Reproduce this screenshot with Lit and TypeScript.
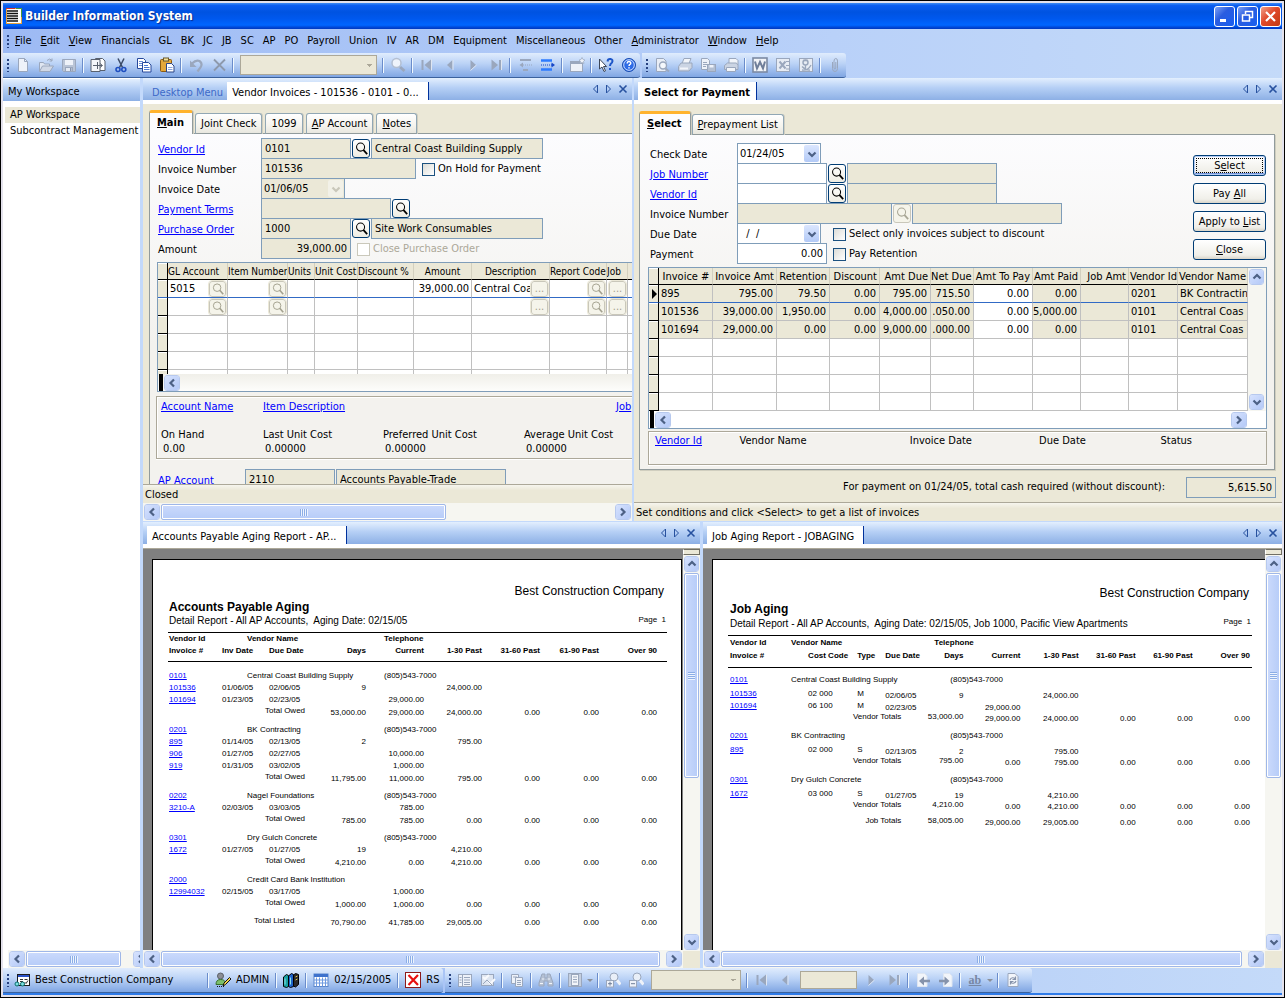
import { LitElement, html, css, svg, nothing, TemplateResult } from "lit";
import { customElement } from "lit/decorators.js";

type Cell = [text: string, span?: number, cls?: string];
type Row = { kind: string; cells: Cell[] };

/* ---------- icons (16 x 16) ---------- */
const G = "#9aa7bd";
const L = "#dfe6f1";
const ICONS: Record<string, TemplateResult> = {
  newdoc: svg`<path d="M3.5 1.5h6l3 3v10h-9z" fill="#eef2f9" stroke=${G}/><path d="M9.500 1.500v3h3" fill="none" stroke=${G}/>`,
  open: svg`<path d="M1.500 14.500v-9h4l1 1.500h5v2" fill=${L} stroke=${G}/><path d="M1.500 14.500l3-5.500h11l-3.500 5.500z" fill="#d0d8e6" stroke=${G}/><path d="M9 3.500q3-3 5 0m0-2v2.500h-2.500" fill="none" stroke=${G}/>`,
  save: svg`<path d="M1.500 2.500h13v12h-12l-1-1z" fill="#b9c4d6" stroke=${G}/><rect x="4" y="3" width="8" height="5" fill="#eef2f9"/><rect x="4.500" y="10.500" width="7" height="4" fill="#e3e9f3" stroke=${G}/><rect x="9" y="11" width="1.500" height="3" fill="#8594ad"/>`,
  copyto: svg`<path d="M5.500 1.500h7l2.500 2.500v9.500h-9.500z" fill="#fff" stroke="#59616e"/><path d="M1 2.500h9v12h-9z" fill="#f4f6fa" stroke="#59616e"/><path d="M3 8.500h9M7.500 5v7M10 6.500l2.500 2-2.500 2" fill="none" stroke="#59616e"/>`,
  cut: svg`<path d="M5 1.500l4.500 9M11 1.500l-4.500 9" stroke="#3a4a66" stroke-width="1.500" fill="none"/><circle cx="5" cy="12.500" r="2" fill="none" stroke="#1f4fc0" stroke-width="1.600"/><circle cx="10.800" cy="12.500" r="2" fill="none" stroke="#1f4fc0" stroke-width="1.600"/>`,
  copy: svg`<path d="M1.500 1.500h6l2 2v8h-8z" fill="#fff" stroke="#27499b"/><path d="M3 4.500h4M3 6.500h4M3 8.500h3" stroke="#6a8fd8"/><path d="M6.500 5.500h6l2.500 2.500v7h-8.500z" fill="#fff" stroke="#27499b"/><path d="M8 8.500h4M8 10.500h5.500M8 12.500h5.500" stroke="#4b78d0"/>`,
  paste: svg`<rect x="1.500" y="2.500" width="11" height="12" rx="1" fill="#e5a83a" stroke="#8a5a10"/><rect x="4.500" y="1" width="5" height="3" fill="#f6e29c" stroke="#6b5a2a"/><path d="M7.500 6.500h5l2.500 2.500v6h-7.500z" fill="#fff" stroke="#2c4687"/><path d="M9 10.500h4.500M9 12.500h4.500" stroke="#8aa4dc"/>`,
  undo: svg`<path d="M4 6.500q4-4 7.500-2.500 3.500 2.500 1 6.500l-3 4" fill="none" stroke=${G} stroke-width="2.200"/><path d="M2 3.500v6.500h6.500z" fill=${G}/>`,
  del: svg`<path d="M3 2.500l11 11M14 2.500l-11 11" stroke="#8d99ac" stroke-width="1.800"/>`,
  find: svg`<path d="M10 10l4.500 4" stroke=${G} stroke-width="3"/><circle cx="6.500" cy="6" r="4.500" fill="#eef3fb" stroke="#b3bfd2" stroke-width="1.500"/>`,
  first: svg`<path d="M3.500 3v10" stroke=${G} stroke-width="2"/><path d="M12 2.500v11L5.500 8z" fill=${G}/><path d="M12.500 2.500v11" stroke=${L}/>`,
  prev: svg`<path d="M10.500 3v10L5 8z" fill=${G}/><path d="M11 3v10" stroke=${L}/>`,
  next: svg`<path d="M5.500 3v10L11 8z" fill=${G}/><path d="M5.500 13.500l6-5.500" stroke=${L}/>`,
  last: svg`<path d="M3.500 2.500v11L10 8z" fill=${G}/><path d="M12 3v10" stroke=${G} stroke-width="2"/><path d="M13.500 3v10" stroke=${L}/>`,
  outdent: svg`<path d="M3 3h11M6 13h5" stroke=${G} stroke-width="2"/><path d="M6 8h9" stroke=${G} stroke-dasharray="1 1"/><path d="M6 5.500L2.500 8l3.500 2.500z" fill=${G}/>`,
  indent: svg`<path d="M1 3.500h11M1 12.500h11" stroke="#2c7bff" stroke-width="2.400"/><path d="M1 8h11" stroke="#1546c8" stroke-dasharray="1 1"/><path d="M11.500 5.500L15 8l-3.500 2.500z" fill="#1546c8"/>`,
  window: svg`<rect x="1.500" y="4.500" width="12" height="10" fill="#edf1f8" stroke=${G}/><rect x="2" y="5" width="11" height="2" fill=${G}/><path d="M13 .500l1 2 2 .500-1.500 1.500.500 2-2-1-2 1 .500-2L10 3l2-.500z" fill="#eef2f9" stroke=${G} stroke-width=".700"/>`,
  whats: svg`<path d="M1.500 2v10l2.500-2 2 4.500 1.500-.700-2-4.300H8.500z" fill="#fff" stroke="#3c4658"/><path d="M9.500 4.500q.500-3 3-2.500 3 .700 1.500 3.500-2 1.500-2 3.500M12 11v2" fill="none" stroke="#1c55c8" stroke-width="2"/>`,
  help: svg`<circle cx="8" cy="8" r="6.500" fill="#2d6be6" stroke="#174bb0"/><circle cx="8" cy="8" r="5.300" fill="none" stroke="#dbe8ff" stroke-width=".900"/><path d="M6.200 6.600q0-2.100 1.900-2 2.200.400 1.500 2.200-1.600.900-1.600 2.100M8 10.200v1.300" fill="none" stroke="#fff" stroke-width="1.500"/>`,
  preview: svg`<path d="M2.500 1.500h7l2.500 2.500v10.500h-9.500z" fill="#e9eef6" stroke=${G}/><circle cx="9" cy="8.500" r="3.500" fill="#f5f8fc" stroke=${G} stroke-width="1.400"/><path d="M11.500 11.500l3.500 3" stroke=${G} stroke-width="2"/>`,
  print: svg`<path d="M5 6.500l2-5h7l-2 5" fill="#f2f5fa" stroke=${G}/><path d="M1.500 9.500l2.500-3.500h11v4.500l-3 3.500h-10.500z" fill="#cbd4e3" stroke=${G}/><path d="M3 11.500h8" stroke="#f2f5fa" stroke-width="2"/>`,
  export: svg`<path d="M1.500 1.500h6l2 2v9h-8z" fill="#eef2f9" stroke=${G}/><path d="M3 5.500h4M3 7.500h4M3 9.500h3" stroke=${G}/><rect x="7.500" y="7.500" width="8" height="7" fill="#b3bfd2" stroke=${G}/><rect x="9.500" y="8" width="4" height="2.500" fill="#eef2f9"/>`,
  fax: svg`<path d="M6 6.500v-5h7l2 2v5" fill="#f2f5fa" stroke=${G}/><path d="M1.500 8.500l3-2.500h9l1.500 2.500v4h-13.500z" fill="#cbd4e3" stroke=${G}/><path d="M3.500 10.500h9v4h-9z" fill="#f2f5fa" stroke=${G}/>`,
  word: svg`<rect x="1" y="1" width="14" height="14" fill="#f1f3f7" stroke="#7c8aa3" stroke-width="1.600"/><path d="M3 4.500l2 7 3-6.500 3 6.500 2-7" fill="none" stroke="#6f7e99" stroke-width="2"/>`,
  excel: svg`<rect x="1.500" y="1.500" width="13" height="13" fill="#e7ecf4" stroke=${G}/><path d="M4.500 4.500l6 7M10.500 4.500l-6 7" stroke=${G} stroke-width="2"/><path d="M11 4.500h3M11 8.500h3M11 12h3" stroke=${G}/>`,
  pdf: svg`<rect x="1.500" y="1.500" width="13" height="13" fill="#e7ecf4" stroke=${G}/><circle cx="7.500" cy="5.500" r="2.500" fill="none" stroke=${G} stroke-width="1.500"/><path d="M5 3.500h5M7.500 8v4M4 13q6 1 9-5M4 9.500q4 4 8 3.500" fill="none" stroke=${G} stroke-width="1.300"/>`,
  clip: svg`<path d="M5.500 5v6.500q0 3 2.500 3t2.500-3V4q0-2.500-1.700-2.500T7 4v7q0 1 .900 1t.900-1V5" fill="none" stroke=${G}/>`,
  company: svg`<rect x="3.500" y="2.500" width="12" height="11" fill="#fff" stroke="#1c1c1c"/><rect x="4" y="3" width="11" height="2" fill="#2a52c9"/><path d="M6 7.500h3M6 9.500h3M10.500 7.500h3M10.500 10l1.500 1.500 2-3" stroke="#333" fill="none"/><circle cx="3" cy="12" r="2" fill="#7fe0e0" stroke="#0a6f6f"/><circle cx="8.500" cy="12" r="2" fill="#7fe0e0" stroke="#0a6f6f"/>`,
  user: svg`<circle cx="5.500" cy="4" r="3" fill="#8b8f96" stroke="#5c6068"/><path d="M1 12.500q0-5 4.500-5t4.500 3v2z" fill="#7cbf6a" stroke="#38702c"/><path d="M8 14l1-3 5.500-5.500 1.500 1.500-5.500 5.500z" fill="#f4d44a" stroke="#111"/><path d="M2 14.500h7" stroke="#111" stroke-dasharray="1 1"/>`,
  books: svg`<path d="M.500 5l3-2.500 2 1v11l-2 1-3-1z" fill="#18a0a0" stroke="#000"/><path d="M5.500 4l3-2.500 2 1v12l-3 1-2-1z" fill="#1e63c9" stroke="#000"/><path d="M10.500 3l2-1.500 3 1v10l-3 2.500-2-1z" fill="#2a2a2a" stroke="#000"/><path d="M2 6.500v6M7.500 5.500v7" stroke="#8fe3ea"/><path d="M12.500 5l2-1M12.500 8l2-1" stroke="#e7c94c"/>`,
  calendar: svg`<rect x="1" y="2" width="14" height="12.500" fill="#fff" stroke="#5b86cc"/><rect x="1" y="2" width="14" height="3" fill="#3e72cc"/><path d="M3.500 5.500v9M6.500 5.500v9M9.500 5.500v9M12.500 5.500v9M1 8h14M1 11h14" stroke="#6f9ae0"/>`,
  redx: svg`<rect x=".500" y=".500" width="15" height="15" fill="#fff" stroke="#8b1a1a"/><path d="M3.500 3l9.500 10M13 3l-9.500 10" stroke="#e81010" stroke-width="2.200"/>`,
  tree: svg`<rect x="1.500" y="2.500" width="13" height="12" fill="#eef2f9" stroke=${G}/><path d="M5.500 3v11M7 5.500h6M7 8h6M7 10.500h6M7 12.500h6M2.500 5.500h2M2.500 8h2M2.500 10.500h2" stroke=${G}/>`,
  checks: svg`<rect x="1.500" y="2.500" width="12" height="11" fill="#dfe6f1" stroke=${G}/><path d="M3 5l2 2 4-4M8 9l2.500 2.500L15 7" fill="none" stroke="#f8fafd" stroke-width="2"/><path d="M3 12l4-4 5 5" fill="none" stroke=${G}/>`,
  pages: svg`<path d="M2.500 2.500h7v9h-7z" fill="#eef2f9" stroke=${G}/><path d="M6.500 5.500h7v9h-7z" fill="#eef2f9" stroke=${G}/><path d="M4 5h4M8 8.500h4M8 10.500h4M8 12.500h4" stroke=${G}/>`,
  binoc: svg`<path d="M4 2h3v4h2V2h3l3 9v3h-5V9H6v5H1v-3z" fill="#b4c0d3" stroke=${G}/><path d="M2 11.500h3M11 11.500h3M4 7h2M10 7h2" stroke="#f2f5fa"/>`,
  layout: svg`<rect x="1.500" y="1.500" width="13" height="13" fill="#c5cfdf" stroke=${G}/><rect x="4.500" y="2.500" width="7" height="11" fill="#f2f5fa" stroke=${G}/><path d="M6 5h4M6 7.500h4M6 10h4" stroke=${G}/>`,
  zoomin: svg`<path d="M11 7l4.500 5.500" stroke="#eef2f9" stroke-width="3"/><circle cx="9" cy="5" r="4" fill="#e9eff8" stroke=${G}/><rect x="1.500" y="8.500" width="7" height="6.500" fill="#eef2f9" stroke=${G}/><path d="M3 11.700h4M5 9.700v4" stroke="#6f7e99"/>`,
  zoomout: svg`<path d="M11 7l4.500 5.500" stroke="#eef2f9" stroke-width="3"/><circle cx="9" cy="5" r="4" fill="#e9eff8" stroke=${G}/><rect x="1.500" y="8.500" width="7" height="6.500" fill="#eef2f9" stroke=${G}/><path d="M3 11.700h4" stroke="#6f7e99"/>`,
  pageback: svg`<path d="M2.500 1.500h7l2.500 2.500v10.500h-9.500z" fill="#f2f5fa" stroke=${L}/><path d="M15 9H8" stroke="#8693ab" stroke-width="2.500"/><path d="M9 4.500v9L4 9z" fill="#8693ab"/>`,
  pagefwd: svg`<path d="M5.500 1.500h6l2.500 2.500v10.500h-8.500z" fill="#f2f5fa" stroke=${L}/><path d="M1 9h6" stroke="#8693ab" stroke-width="2.500"/><path d="M6.500 4.500v9l5-4.500z" fill="#8693ab"/>`,
  refresh: svg`<path d="M3 1.500h7l3 3v10h-10z" fill="#f2f5fa" stroke=${G}/><path d="M5 8q1-3 4-2l1.500 1M11 9q-1 3-4 2l-1.500-1M10.500 4.500v3h-3M5.500 12.500v-3h3" fill="none" stroke="#8693ab" stroke-width="1.200"/>`,
};
const icon = (n: string) => html`<svg class="ico" viewBox="0 0 16 16" aria-hidden="true">${ICONS[n]}</svg>`;
const lens = html`<svg class="ico" viewBox="0 0 16 16" aria-hidden="true"><circle cx="7" cy="6.500" r="4.300" fill="none" stroke="currentColor" stroke-width="1.100"/><path d="M10 9.500l4 4.500" stroke="currentColor" stroke-width="1.900"/></svg>`;
const chev = (d: "l" | "r" | "u" | "d") => {
  const p = { l: "M7 1.500L3.500 5 7 8.500", r: "M3 1.500L6.500 5 3 8.500", u: "M1.500 6.500L5 3l3.500 3.500", d: "M1.500 3.500L5 7l3.500-3.500" }[d];
  return html`<svg class="chev" viewBox="0 0 10 10" aria-hidden="true"><path d=${p} fill="none" stroke="currentColor" stroke-width="2.200"/></svg>`;
};

/* ---------- small helpers ---------- */
/** Text with its access key underlined; "&" precedes the key. */
const key = (t: string) => {
  const i = t.indexOf("&");
  return i < 0 ? html`<span>${t}</span>` : html`<span>${t.slice(0, i)}<u>${t[i + 1]}</u>${t.slice(i + 2)}</span>`;
};
const link = (t: string) => html`<a href="#">${t}</a>`;
const tools = (list: string[]) =>
  list.map((n) =>
    n === "|" ? html`<span class="sep"></span>`
    : n === "combo" ? html`<select class="combo" aria-label="Record" disabled></select>`
    : n === "zoom" ? html`<select class="combo zoom" aria-label="Zoom" disabled></select>`
    : n === "page" ? html`<input class="pageno" aria-label="Page number" disabled>`
    : n === "arrow" ? html`<span class="drop"></span>`
    : n === "ab" ? html`<button class="tool ab">ab</button>`
    : html`<button class="tool" aria-label=${n}>${icon(n)}</button>`);
const bar = (dir: "h" | "v", size: number) => html`
  <div class="sb ${dir}">
    <button class="arr" aria-label="Scroll back">${chev(dir === "h" ? "l" : "u")}</button>
    <div class="track">${size ? html`<div class="thumb" style="flex-basis:${size}%"><i></i></div>` : nothing}</div>
    <button class="arr" aria-label="Scroll forward">${chev(dir === "h" ? "r" : "d")}</button>
  </div>`;
const paneHead = (tabs: { text: string; cls?: string }[]) => html`
  <div class="phead">
    ${tabs.map((t) => html`<button class="dtab ${t.cls ?? ""}">${t.text}</button>`)}
    <span class="fill"></span>
    <button class="nav" aria-label="Previous tab"><svg viewBox="0 0 10 10"><path d="M7.500 1v8l-4-4z" fill="none" stroke="currentColor"/></svg></button>
    <button class="nav" aria-label="Next tab"><svg viewBox="0 0 10 10"><path d="M2.500 1v8l4-4z" fill="none" stroke="currentColor"/></svg></button>
    <button class="nav" aria-label="Close tab"><svg viewBox="0 0 10 10"><path d="M1.500 1.500l7 7M8.500 1.500l-7 7" stroke="currentColor" stroke-width="1.600"/></svg></button>
  </div>`;
const field = (label: string, value: string, cls: string, ro = true) =>
  html`<input class="fld ${cls}" aria-label=${label} .value=${value} ?readonly=${ro}>`;
const dateField = (label: string, value: string, disabled = false) => html`
  <span class="date ${disabled ? "off" : ""}">
    <select aria-label=${label} ?disabled=${disabled}><option>${value}</option></select>
    <span class="dd">${chev("d")}</span>
  </span>`;
const look = (off = false) => html`<button class="look" aria-label="Look up" ?disabled=${off}>${lens}</button>`;
const check = (text: string, off = false) =>
  html`<label class="chk ${off ? "off" : ""}"><input type="checkbox" ?disabled=${off}>${text}</label>`;
const cols = (w: number[]) => html`<colgroup>${w.map((x) => html`<col style=${x ? `width:${x}px` : ""}>`)}</colgroup>`;

/* ---------- data ---------- */
const MENU = ["&File", "&Edit", "&View", "Financials", "GL", "BK", "JC", "JB", "SC", "AP", "PO", "Payroll", "Union", "IV", "AR", "DM", "Equipment", "Miscellaneous", "Other", "&Administrator", "&Window", "&Help"];

const PAY_COLS: [string, number, string][] = [["Invoice #", 54, "c"], ["Invoice Amt", 64, "r"], ["Retention", 53, "r"], ["Discount", 50, "r"], ["Amt Due", 51, "r"], ["Net Due", 43, "r"], ["Amt To Pay", 59, "r"], ["Amt Paid", 48, "r"], ["Job Amt", 48, "r"], ["Vendor Id", 49, ""], ["Vendor Name", 70, ""]];
const PAY_ROWS = [
  ["895", "795.00", "79.50", "0.00", "795.00", "715.50", "0.00", "0.00", "", "0201", "BK Contractin"],
  ["101536", "39,000.00", "1,950.00", "0.00", "4,000.00", ".050.00", "0.00", "5,000.00", "", "0101", "Central Coas"],
  ["101694", "29,000.00", "0.00", "0.00", "9,000.00", ".000.00", "0.00", "0.00", "", "0101", "Central Coas"],
];
const GL_COLS: [string, number, string][] = [["GL Account", 60, ""], ["Item Number", 60, ""], ["Units", 27, ""], ["Unit Cost", 43, ""], ["Discount %", 56, ""], ["Amount", 58, "c"], ["Description", 78, "c"], ["Report Code", 57, ""], ["Job", 21, ""]];

const zeros = (n: number): Cell[] => Array.from({ length: n }, () => ["0.00", 1, "r"] as Cell);
const apVendor = (id: string, name: string, tel = ""): Row => ({ kind: "v", cells: [[id, 2, "a"], [name, 4], [tel, 6]] });
const apInv = (id: string, d1: string, d2: string, days: string, cur: string, past: string): Row =>
  ({ kind: "i", cells: [[id, 1, "a"], [d1, 2], [d2, 1, "in"], [days, 1, "r"], [cur, 2, "r"], [past, 1, "r"], ["", 4]] });
const apTotal = (n: string[]): Row =>
  ({ kind: "t", cells: [["", 3], ["Total Owed"], [n[0], 1, "r"], [n[1], 2, "r"], [n[2], 1, "r"], ...zeros(3), [""]] });
const AP_W = [54, 25, 18, 55, 46, 18, 40, 58, 58, 59, 58, 10];
const AP_HEAD: Row[] = [
  { kind: "h1", cells: [["Vendor Id", 2], ["Vendor Name", 4], ["Telephone", 6]] },
  { kind: "h2", cells: [["Invoice #"], ["Inv Date", 2], ["Due Date", 1, "in"], ["Days", 1, "r"], ["Current", 2, "r"], ["1-30 Past", 1, "r"], ["31-60 Past", 1, "r"], ["61-90 Past", 1, "r"], ["Over 90", 1, "r"], [""]] },
];
const AP_ROWS: Row[] = [
  apVendor("0101", "Central Coast Building Supply", "(805)543-7000"),
  apInv("101536", "01/06/05", "02/06/05", "9", "", "24,000.00"),
  apInv("101694", "01/23/05", "02/23/05", "", "29,000.00", ""),
  apTotal(["53,000.00", "29,000.00", "24,000.00"]),
  apVendor("0201", "BK  Contracting", "(805)543-7000"),
  apInv("895", "01/14/05", "02/13/05", "2", "", "795.00"),
  apInv("906", "01/27/05", "02/27/05", "", "10,000.00", ""),
  apInv("919", "01/31/05", "03/02/05", "", "1,000.00", ""),
  apTotal(["11,795.00", "11,000.00", "795.00"]),
  apVendor("0202", "Nagel Foundations", "(805)543-7000"),
  apInv("3210-A", "02/03/05", "03/03/05", "", "785.00", ""),
  apTotal(["785.00", "785.00", "0.00"]),
  apVendor("0301", "Dry Gulch Concrete", "(805)543-7000"),
  apInv("1672", "01/27/05", "01/27/05", "19", "", "4,210.00"),
  apTotal(["4,210.00", "0.00", "4,210.00"]),
  apVendor("2000", "Credit Card Bank Institution"),
  apInv("12994032", "02/15/05", "03/17/05", "", "1,000.00", ""),
  apTotal(["1,000.00", "1,000.00", "0.00"]),
  { kind: "t", cells: [["", 2], ["Total Listed", 2, "in2"], ["70,790.00", 1, "r"], ["41,785.00", 2, "r"], ["29,005.00", 1, "r"], ...zeros(3), [""]] },
];

const JOB_W = [63, 17, 49, 28, 16, 33, 16, 13, 57, 58, 57, 57, 57, 2];
const jobVendor = (id: string, name: string): Row => ({ kind: "v", cells: [[id, 1, "a"], [name, 6], ["(805)543-7000", 7]] });
const jobInv = (id: string, code: string, type: string, due: string, days: string, cur: string, past: string): Row =>
  ({ kind: "i", cells: [[id, 1, "a"], [""], [code], [type], [due, 2, "d"], [days, 2, "r d"], [cur, 1, "r d"], [past, 1, "r d"], ["", 4]] });
const jobTotal = (label: string, n: string[], kind = "t"): Row =>
  ({ kind, cells: [[""], [label, 4, "rl"], [n[0], 3, "rl"], [n[1], 1, "r"], [n[2], 1, "r"], ...zeros(3), [""]] });
const JOB_HEAD: Row[] = [
  { kind: "h1", cells: [["Vendor Id"], ["Vendor Name", 5], ["Telephone", 8]] },
  { kind: "h2", cells: [["Invoice #"], [""], ["Cost Code"], ["Type"], ["Due Date", 2], ["Days", 2, "r"], ["Current", 1, "r"], ["1-30 Past", 1, "r"], ["31-60 Past", 1, "r"], ["61-90 Past", 1, "r"], ["Over 90", 1, "r"], [""]] },
];
const JOB_ROWS: Row[] = [
  jobVendor("0101", "Central Coast Building Supply"),
  jobInv("101536", "02 000", "M", "02/06/05", "9", "", "24,000.00"),
  jobInv("101694", "06 100", "M", "02/23/05", "", "29,000.00", ""),
  jobTotal("Vendor Totals", ["53,000.00", "29,000.00", "24,000.00"]),
  jobVendor("0201", "BK Contracting"),
  jobInv("895", "02 000", "S", "02/13/05", "2", "", "795.00"),
  jobTotal("Vendor Totals", ["795.00", "0.00", "795.00"]),
  jobVendor("0301", "Dry Gulch Concrete"),
  jobInv("1672", "03 000", "S", "01/27/05", "19", "", "4,210.00"),
  jobTotal("Vendor Totals", ["4,210.00", "0.00", "4,210.00"], "t last"),
  jobTotal("Job Totals", ["58,005.00", "29,000.00", "29,005.00"]),
];

const report = (cls: string, title: string, sub: string, w: number[], head: Row[], rows: Row[]) => html`
  <div class="viewer ${cls}">
    <div class="view">
      <div class="paper">
        <p class="co">Best Construction Company</p>
        <h2>${title}</h2>
        <div class="sub"><span>${sub}</span><span class="pg">Page&nbsp; 1</span></div>
        <table class="rep">
          ${cols(w)}
          <thead>${head.map((r) => html`<tr class=${r.kind}>${r.cells.map(([t, s = 1, c = ""]) => html`<th colspan=${s} class=${c}>${t}</th>`)}</tr>`)}</thead>
          <tbody>${rows.map((r) => html`<tr class=${r.kind}>${r.cells.map(([t, s = 1, c = ""]) => html`<td colspan=${s} class=${c}>${c === "a" ? link(t) : t}</td>`)}</tr>`)}</tbody>
        </table>
      </div>
      ${bar("h", 99)}
    </div>
    <div class="vcol"><span class="split"></span>${bar("v", 57)}<span class="corner"></span></div>
  </div>`;

@customElement("app-root")
export class AppRoot extends LitElement {
  static styles = css`
    :host { display: block; height: 100vh; min-width: 1000px; font: 11px/14px "DejaVu Sans Condensed", "DejaVu Sans", Roboto, sans-serif; color: #000; --blue: #7f9db9; --tan: #ebe8d7; }
    * { box-sizing: border-box; }
    button, input, select { font: inherit; color: inherit; margin: 0; padding: 0; border: 0; border-radius: 0; background: none; }
    button { display: inline-flex; align-items: center; justify-content: center; white-space: nowrap; }
    a { color: #0000ff; text-underline-offset: 1px; }
    u { text-underline-offset: 1px; }
    p, h1, h2 { margin: 0; font-size: inherit; font-weight: normal; }
    .ico { width: 16px; height: 16px; display: block; flex: none; }
    .chev { width: 10px; height: 10px; display: block; }
    .fill { flex: 1; }

    .win { height: 100%; display: flex; flex-direction: column; border: 1px solid #000; box-shadow: inset 0 0 0 2px #e4e2ec; padding: 2px; background: #e4e2ec; }
    .title { height: 26px; flex: none; display: flex; align-items: center; gap: 2px; padding: 0 1px 0 3px; background: linear-gradient(#3f8cf3 0, #0a5cf0 10%, #0053e1 35%, #0058ee 60%, #0066ff 85%, #0046d5 94%, #0038c0); color: #fff; }
    .title h1 { font-size: 12px; line-height: 18px; font-weight: bold; flex: 1; padding-left: 1px; text-shadow: 1px 1px 1px #0a2a8a; }
    .title svg.app { width: 16px; height: 16px; }
    .cap { width: 21px; height: 21px; border: 1px solid #fff; border-radius: 3px; background: linear-gradient(135deg, #7ea2f5, #2a5de0 40%, #1a5ff0); }
    .cap.x { background: linear-gradient(135deg, #f0a08a, #e0492a 45%, #c43a10); }
    .cap svg { width: 15px; height: 15px; }

    .bars { flex: none; background: linear-gradient(90deg, #9dbaf4, #b9d1f9 65%, #c4daf9); }
    .menu { height: 24px; display: flex; align-items: center; padding-left: 4px; }
    .menu button { margin-right: 9px; }
    .menu .grip { margin-right: 6px; }
    .grip { width: 2px; height: 13px; flex: none; background: repeating-linear-gradient(#27417f 0 2px, transparent 2px 4px); }
    .strip { display: flex; gap: 2px; height: 25px; }
    .tb { display: flex; align-items: center; padding-left: 4px; border-radius: 0 3px 3px 0; background: linear-gradient(#e0ecfd, #bad2f6 45%, #80a6e3); border-bottom: 1px solid #3b619c; }
    .tb .grip { margin-right: 2px; }
    .tool { width: 23px; height: 22px; flex: none; }
    .sep { width: 2px; height: 15px; margin: 0 2px; flex: none; border-left: 1px solid #6a8ccb; border-right: 1px solid #f1f9ff; }
    .combo { appearance: none; width: 137px; height: 20px; margin: 0 3px 0 4px; border: 1px solid #aca899; opacity: 1; background: linear-gradient(to top right, transparent 50%, transparent 50%), var(--tan); background: conic-gradient(from -45deg at 50% 100%, #aca899 90deg, transparent 0) calc(100% - 4px) 8px / 6px 3px no-repeat, var(--tan); }
    .zoom { width: 90px; }
    .pageno { width: 57px; height: 18px; border: 1px solid #aca899; background: var(--tan); margin: 0 2px 0 4px; }
    .drop { border: 3px solid transparent; border-top-color: #8b9098; border-bottom: 0; margin: 0 2px 0 1px; flex: none; }
    .ab { font: bold 12px/14px "Liberation Serif", serif; color: #7787a3; text-decoration: underline; }

    .main { flex: 1; min-height: 0; display: flex; gap: 3px; background: #c3d9fb; }
    .side { width: 137px; flex: none; display: flex; flex-direction: column; background: #fff; overflow: hidden; }
    .side h2 { height: 25px; line-height: 26px; padding-left: 5px; border: 1px solid #fff; border-width: 1px 0 2px; background: linear-gradient(#e3effe, #b5cff5 45%, #8db0e5); }
    .side ul { list-style: none; margin: 4px 0 0; padding: 0; flex: 1; }
    .side li { height: 16px; line-height: 16px; padding-left: 5px; margin: 0 -10px 0 2px; white-space: nowrap; }
    .side li.on { background: var(--tan); }
    .side .sb { margin-left: 5px; width: 142px; }
    .docs { flex: 1; min-width: 0; display: grid; grid-template-rows: minmax(0, 443fr) minmax(0, 445fr); gap: 1px; }
    .pair { display: grid; gap: 2px; min-height: 0; }
    .pair.top { grid-template-columns: minmax(0, 489fr) minmax(0, 648fr); }
    .pair.bot { grid-template-columns: minmax(0, 557fr) minmax(0, 579fr); gap: 3px; }
    .pane { display: flex; flex-direction: column; min-height: 0; min-width: 0; overflow: hidden; background: var(--tan); }
    .phead { height: 26px; flex: none; display: flex; align-items: flex-end; padding-left: 4px; padding-right: 2px; border-bottom: 4px solid #fff; background: linear-gradient(#e3effe, #b5cff5 45%, #8db0e5); }
    .dtab { height: 18px; padding: 3px 9px 0 5px; background: #fff; border-right: 1px solid #00319c; }
    .dtab.idle { background: none; border: 0; color: #3d69c8; padding: 3px 4px 0 5px; }
    .dtab.b { font-weight: bold; padding: 3px 6px 0; }
    .nav { width: 14px; height: 22px; color: #27519f; }
    .nav svg { width: 10px; height: 10px; }

    .tabs { display: flex; align-items: flex-end; gap: 3px; height: 30px; margin-bottom: -1px; padding-left: 6px; position: relative; flex: none; }
    .tab { height: 21px; padding: 1px 5px 0; border: 1px solid #91a7b4; border-bottom: 1px solid #919b9c; border-radius: 3px 3px 0 0; background: linear-gradient(#fff, #f5f4ee 60%, #e8e7df); box-shadow: 1px 0 0 #cfcdc0; }
    .tab.on { height: 24px; font-weight: bold; padding: 0 8px 2px 7px; background: #fcfcfe; border: 1px solid #919b9c; border-top: 3px solid #ffb32e; border-bottom: 0; margin-right: -1px; }
    .sheet { flex: 1; min-height: 0; overflow: hidden; margin-left: 6px; border: 1px solid #919b9c; border-width: 1px 0 0 1px; background: linear-gradient(#fcfcfe, #f3f2ee 60%); }

    .form { padding: 4px 0 0 8px; }
    .row { display: flex; height: 20px; align-items: flex-start; white-space: nowrap; }
    .lab { width: 103px; flex: none; line-height: 23px; }
    .fld { height: 21px; padding: 0 3px; border: 1px solid var(--blue); background: #fff; flex: none; }
    .fld:read-only { background: var(--tan); }
    .fld.num { text-align: right; }
    .w6 { width: 6px; flex: none; }
    .w90 { width: 90px; } .w130 { width: 130px; } .w155 { width: 155px; } .w172 { width: 172px; } .w150 { width: 150px; } .w170 { width: 170px; }
    .look { width: 18px; height: 19px; margin: 1px 1px 0; border: 1px solid #003c74; border-radius: 3px; background: linear-gradient(#fff, #eeece3); flex: none; }
    .look:disabled { border-color: #c9c7ba; background: #f5f4ea; color: #a9a796; }
    .look .ico { width: 15px; height: 15px; }
    .date { width: 84px; height: 21px; display: flex; border: 1px solid var(--blue); background: #fff; flex: none; position: relative; }
    .date select { appearance: none; flex: 1; padding-left: 2px; opacity: 1; color: #000; }
    .date.off { background: var(--tan); }
    .dd { position: absolute; right: 1px; top: 1px; width: 15px; height: 17px; display: grid; place-items: center; border-radius: 2px; background: linear-gradient(#dbe6fe, #b3caf7); color: #4d6185; pointer-events: none; }
    .off .dd { background: #f2f1e8; color: #c9c7ba; }
    .chk { display: inline-flex; align-items: center; gap: 3px; height: 20px; margin: 1px 0 0 6px; }
    .chk input { appearance: none; width: 13px; height: 13px; border: 1px solid #1c5180; background: linear-gradient(135deg, #dcdcd7, #fff); }
    .chk.off { color: #aca899; }
    .chk.off input { border-color: #cac8bb; background: #fff; }

    .grid { border: 1px solid var(--blue); background: #fff; overflow: hidden; display: flex; flex-direction: column; }
    .grid table { border-collapse: separate; border-spacing: 0; table-layout: fixed; width: 100%; }
    .grid th, .grid td { height: 18px; padding: 0 2px; overflow: hidden; white-space: nowrap; font-weight: normal; text-align: left; line-height: 14px; border-right: 1px solid #c0c0c0; border-bottom: 1px solid #c0c0c0; vertical-align: middle; }
    .grid th { height: 17px; padding: 2px 0 0 1px; background: var(--tan); border-bottom: 1px solid #000; border-right-color: #d3d0bf; }
    .lgrid th { font-size: 10px; padding-left: 0; letter-spacing: normal; }
    .grid .s { background: var(--tan); border-right: 1px solid #000; border-bottom-color: #000; box-shadow: inset 0 1px #fff; padding: 0; }
    .grid .c { text-align: center; } .grid .r { text-align: right; }
    .grid td.ro { background: var(--tan); }
    .pgrid th.r { padding-right: 2px; padding-left: 0; }
    .pgrid td.r { padding-right: 3px; padding-left: 0; }
    .grid tr.cur td { border-bottom-color: #316ac5; }
    .grid tr.cut td { height: 4px; border-bottom: 0; line-height: 0; }
    .cell { display: flex; align-items: center; justify-content: space-between; height: 17px; margin: 0 -1px 0 0; }
    .cell span { overflow: hidden; }
    .mini { width: 17px; height: 16px; margin-left: auto; flex: none; border: 1px solid #c9c7ba; border-radius: 3px; background: #f5f4ea; color: #a3a18f; outline: 1px solid var(--tan); }
    .mini .ico { width: 14px; height: 14px; }
    .foot { display: flex; height: 17px; background: linear-gradient(#f0efe9, #fdfdfb); }
    .foot::before { content: ""; width: 4px; background: #000; margin-left: 1px; flex: none; }
    .foot .sb { flex: 1; background: none; }
    .lgrid { margin: 4px 0 0 -1px; border-right: 0; width: 520px; }
    .box { border: 1px solid #aca899; box-shadow: inset 1px 1px #fff, 0 1px #fff; }
    .linfo { margin: 4px 0 0 -2px; width: 520px; height: 63px; padding: 3px 4px; display: grid; grid-template-columns: 102px 120px 141px 92px 1fr; grid-template-rows: 14px 14px 14px 14px; white-space: nowrap; }
    .linfo .v { padding-left: 2px; }
    .linfo .gap { grid-column: 1 / -1; }
    .acct { margin-top: 10px; }
    .acct .lab { width: 87px; }
    .acct .fld + .fld { margin-left: 1px; }

    .stat { height: 19px; flex: none; line-height: 19px; padding-left: 2px; border-top: 1px solid #aca899; background: linear-gradient(#f6f5ee, var(--tan) 30%); }

    .sb { display: flex; flex: none; background: #f6f6f1; padding: 1px; gap: 1px; }
    .sb.h { height: 18px; }
    .sb.v { width: 17px; flex: 1; flex-direction: column; min-height: 0; }
    .arr { width: 16px; height: 16px; flex: none; border: 1px solid #fff; border-radius: 3px; outline: 1px solid #b7c9ee; outline-offset: -1px; background: linear-gradient(135deg, #d6e2fe, #b4c9f7); color: #4d6185; }
    .v .arr { width: 15px; }
    .track { flex: 1; display: flex; min-width: 0; min-height: 0; }
    .v .track { flex-direction: column; }
    .thumb { display: grid; place-items: center; border: 1px solid #9fb7e8; box-shadow: inset 0 0 0 1px #fff; border-radius: 2px; background: linear-gradient(#cbdafc, #b6ccf8); min-width: 0; min-height: 0; flex: 0 1 auto; }
    .v .thumb { background: linear-gradient(90deg, #cbdafc, #b6ccf8); }
    .thumb i { width: 8px; height: 7px; background: repeating-linear-gradient(90deg, #8caee6 0 1px, #eef4fe 1px 2px); }
    .v .thumb i { width: 7px; height: 8px; background: repeating-linear-gradient(#8caee6 0 1px, #eef4fe 1px 2px); }

    .pay .tabs { height: 31px; padding-left: 5px; gap: 2px; }
    .pay .sheet { flex: none; margin: 0 7px 0 5px; border-width: 1px; box-shadow: 1px 1px #d0cebf; padding: 8px 7px 4px 8px; height: 336px; }
    .pcols { display: flex; justify-content: space-between; }
    .pcols .form { padding: 0 0 0 2px; }
    .pcols .lab { width: 87px; }
    .acts { display: flex; flex-direction: column; gap: 7px; margin: 12px 1px 0 0; }
    .btn { width: 73px; height: 21px; border: 1px solid #003c74; border-radius: 3px; background: linear-gradient(#fff, #f0efe9 80%, #d9d5c9); }
    .btn.def { box-shadow: inset 0 0 0 1px #b5ccf5, inset 0 -2px #6e93dc; outline: 1px dotted #000; outline-offset: -4px; }
    .pgrid { margin-top: 4px; }
    .pbody { display: flex; }
    .pbody table { flex: 1; min-width: 0; }
    .pbody .sb.v { flex: none; width: 18px; }
    .pgrid .foot { padding-right: 18px; background: #fff; height: 17px; }
    .mark { border: 5px solid transparent; border-left-color: #000; border-right: 0; display: block; margin-left: 3px; }
    .pinfo { margin-top: 2px; height: 34px; padding: 2px 6px; display: grid; grid-template-columns: 85fr 171fr 130fr 122fr 100fr; }
    .total { flex: 1; display: flex; align-items: center; justify-content: flex-end; gap: 21px; padding: 2px 6px 0 0; white-space: nowrap; }

    .viewer { flex: 1; min-height: 0; display: flex; border-top: 1px solid #aca899; background: #808080; }
    .view { flex: 1; min-width: 0; display: flex; flex-direction: column; }
    .paper { flex: 1; min-height: 0; overflow: hidden; margin: 10px 1px 0 9px; border: 1px solid #000; border-bottom: 0; background: #fff; padding: 22px 14px 0 15px; font-family: "Liberation Sans", Arial, sans-serif; white-space: nowrap; }
    .vcol { width: 17px; display: flex; flex-direction: column; background: #ebe8d7; }
    .split { height: 6px; flex: none; border: 1px solid #716f64; border-left-color: #fff; background: var(--tan); }
    .corner { height: 17px; flex: none; background: var(--tan); }
    .co { text-align: right; font-size: 12px; line-height: 18px; padding-right: 3px; }
    .paper h2 { font-size: 12px; line-height: 14px; font-weight: bold; padding-left: 1px; }
    .sub { display: flex; justify-content: space-between; font-size: 10px; line-height: 14px; padding-left: 1px; }
    .pg { font-size: 8px; line-height: 11px; padding-right: 1px; }
    .rep { width: 100%; table-layout: fixed; border-collapse: collapse; border-top: 1px solid #000; margin-top: 4px; font-size: 8px; line-height: 10px; }
    .rep th, .rep td { padding: 1px 0 0; text-align: left; vertical-align: top; height: 12px; }
    .rep th:first-child, .rep td:first-child { padding-left: 1px; }
    .rep .r, .rep .rl { text-align: right; }
    .rep .in { padding-left: 4px; } .rep .in2 { padding-left: 7px; }
    .rep .d { padding-top: 3px; line-height: 9px; }
    .rep .h2 th { height: 17px; border-bottom: 1px solid #000; }
    .rep thead::after { content: ""; display: block; height: 8px; }
    .rep .t td { height: 18px; padding-top: 0; }
    .rep .t td.r { padding-top: 2px; }
    .job .paper { padding: 24px 13px 0 15px; margin-right: 0; border-right: 0; }
    .job .sub { line-height: 16px; }
    .job .rep { margin-top: 3px; }
    .job .rep th:first-child, .job .rep td:first-child, .job h2, .job .sub { padding-left: 2px; }
    .job .rep .h1 th { height: 14px; padding-top: 2px; }
    .job .rep .h2 th { height: 18px; }
    .job .rep thead::after { height: 6px; }
    .job .rep .v td { height: 14px; }
    .job .rep .t.last td { height: 16px; }

    .status { flex: none; background: linear-gradient(90deg, #9dbaf4, #c4daf9); border-bottom: 2px solid #2f7be8; }
    .status .cellb { display: inline-flex; align-items: center; gap: 5px; height: 22px; padding: 0 4px; flex: none; }
    .status .co1 { width: 194px; padding-left: 3px; }
    .status .tb:last-child { padding-right: 8px; }
  `;

  private payCell(t: string, i: number) {
    const align = PAY_COLS[i][2] === "r" ? "r" : "";
    return html`<td class="${align} ${i === 6 ? "" : "ro"}">${t}</td>`;
  }

  private glRow(first: boolean, buttons: boolean) {
    const b = (t: string | TemplateResult, text = "") => html`<div class="cell"><span>${text}</span><button class="mini" disabled aria-label="Look up">${t}</button></div>`;
    return html`<tr class=${first ? "cur" : ""}><td class="s"></td>
      ${GL_COLS.map((_, i) => {
        if (!buttons) return html`<td></td>`;
        if (i === 0) return html`<td>${b(lens, first ? "5015" : "")}</td>`;
        if (i === 1 || i === 7) return html`<td>${b(lens)}</td>`;
        if (i === 6) return html`<td>${b("...", first ? "Central Coa" : "")}</td>`;
        if (i === 8) return html`<td>${b("...")}</td>`;
        return html`<td class="r">${i === 5 && first ? "39,000.00" : ""}</td>`;
      })}<td></td></tr>`;
  }

  private invoices() {
    return html`<section class="pane">
      ${paneHead([{ text: "Desktop Menu", cls: "idle" }, { text: "Vendor Invoices - 101536 - 0101 - 0..." }])}
      <div class="tabs">
        <button class="tab on">${key("&Main")}</button>
        ${["&Joint Check", "1099", "&AP Account", "&Notes"].map((t) => html`<button class="tab">${key(t)}</button>`)}
      </div>
      <div class="sheet"><div class="form">
        <div class="row"><span class="lab">${link("Vendor Id")}</span>${field("Vendor Id", "0101", "w90")}${look()}${field("Vendor name", "Central Coast Building Supply", "w172")}</div>
        <div class="row"><span class="lab">Invoice Number</span>${field("Invoice Number", "101536", "w155")}${check("On Hold for Payment")}</div>
        <div class="row"><span class="lab">Invoice Date</span>${dateField("Invoice Date", "01/06/05", true)}</div>
        <div class="row"><span class="lab">${link("Payment Terms")}</span>${field("Payment Terms", "", "w130")}${look()}</div>
        <div class="row"><span class="lab">${link("Purchase Order")}</span>${field("Purchase Order", "1000", "w90")}${look()}${field("Order name", "Site Work Consumables", "w172")}</div>
        <div class="row"><span class="lab">Amount</span>${field("Amount", "39,000.00", "w90 num")}${check("Close Purchase Order", true)}</div>
        <div class="grid lgrid">
          <table>${cols([10, ...GL_COLS.map((c) => c[1]), 0])}
            <thead><tr><th class="s"></th>${GL_COLS.map(([t, , c]) => html`<th class=${c}>${t}</th>`)}<th></th></tr></thead>
            <tbody>${this.glRow(true, true)}${this.glRow(false, true)}${[1, 2, 3].map(() => this.glRow(false, false))}
              <tr class="cut"><td class="s"></td>${GL_COLS.map(() => html`<td></td>`)}<td></td></tr></tbody>
          </table>
          <div class="foot">${bar("h", 0)}</div>
        </div>
        <div class="box linfo">
          ${link("Account Name")}<span>${link("Item Description")}</span><span></span><span></span><span>${link("Job")}</span>
          <span class="gap"></span>
          <span>On Hand</span><span>Last Unit Cost</span><span>Preferred Unit Cost</span><span>Average Unit Cost</span><span></span>
          <span class="v">0.00</span><span class="v">0.00000</span><span class="v">0.00000</span><span class="v">0.00000</span>
        </div>
        <div class="row acct"><span class="lab">${link("AP Account")}</span>${field("AP Account", "2110", "w90")}${field("Account name", "Accounts Payable-Trade", "w170")}</div>
      </div></div>
      <div class="stat">Closed</div>
      ${bar("h", 63)}
    </section>`;
  }

  private payment() {
    return html`<section class="pane pay">
      ${paneHead([{ text: "Select for Payment", cls: "b" }])}
      <div class="tabs"><button class="tab on">${key("&Select")}</button><button class="tab">${key("&Prepayment List")}</button></div>
      <div class="sheet">
        <div class="pcols">
          <div class="form">
            <div class="row"><span class="lab">Check Date</span>${dateField("Check Date", "01/24/05")}</div>
            <div class="row"><span class="lab">${link("Job Number")}</span>${field("Job Number", "", "w90", false)}${look()}${field("Job name", "", "w150")}</div>
            <div class="row"><span class="lab">${link("Vendor Id")}</span>${field("Vendor Id", "", "w90", false)}${look()}${field("Vendor name", "", "w150")}</div>
            <div class="row"><span class="lab">Invoice Number</span>${field("Invoice Number", "", "w155")}${look(true)}${field("Invoice name", "", "w150")}</div>
            <div class="row"><span class="lab">Due Date</span>${dateField("Due Date", "\u00a0\u00a0/\u00a0\u00a0/")}<span class="w6"></span>${check("Select only invoices subject to discount")}</div>
            <div class="row"><span class="lab">Payment</span>${field("Payment", "0.00", "w90 num", false)}${check("Pay Retention")}</div>
          </div>
          <div class="acts">
            <button class="btn def">${key("S&elect")}</button><button class="btn">${key("Pay &All")}</button>
            <button class="btn">${key("Apply to &List")}</button><button class="btn">${key("&Close")}</button>
          </div>
        </div>
        <div class="grid pgrid">
          <div class="pbody">
            <table>${cols([10, ...PAY_COLS.map((c) => c[1]), 0])}
              <thead><tr><th class="s"></th>${PAY_COLS.map(([t, , c]) => html`<th class=${c}>${t}</th>`)}<th></th></tr></thead>
              <tbody>
                ${PAY_ROWS.map((r, n) => html`<tr class=${n ? "" : "cur"}><td class="s">${n ? nothing : html`<i class="mark"></i>`}</td>${r.map((t, i) => this.payCell(t, i))}<td></td></tr>`)}
                ${[1, 2, 3, 4].map(() => html`<tr><td class="s"></td>${PAY_COLS.map(() => html`<td></td>`)}<td></td></tr>`)}
              </tbody>
            </table>
            ${bar("v", 0)}
          </div>
          <div class="foot">${bar("h", 0)}</div>
        </div>
        <div class="box pinfo"><span>${link("Vendor Id")}</span><span>Vendor Name</span><span>Invoice Date</span><span>Due Date</span><span>Status</span></div>
      </div>
      <div class="total"><span>For payment on 01/24/05, total cash required (without discount):</span>${field("Total cash required", "5,615.50", "w90 num")}</div>
      <div class="stat">Set conditions and click &lt;Select&gt; to get a list of invoices</div>
    </section>`;
  }

  render() {
    return html`<div class="win">
      <header class="title">
        <svg class="app" viewBox="0 0 16 16" aria-hidden="true"><rect x=".500" y=".500" width="15" height="15" fill="#fff" stroke="#e8a33d"/><path d="M1 3h11M1 5.500h11M1 8h11M1 10.500h11M1 13h11" stroke="#111" stroke-width="1.400"/><path d="M15.500 0v9M10 .500h6" stroke="#4a9a3c"/><path d="M0 .500h9" stroke="#c33"/></svg>
        <h1>Builder Information System</h1>
        <button class="cap" aria-label="Minimize"><svg viewBox="0 0 15 15"><path d="M3 11.500h6" stroke="#fff" stroke-width="3"/></svg></button>
        <button class="cap" aria-label="Restore"><svg viewBox="0 0 15 15"><path d="M5.500 5V2.500h7v6H10" fill="none" stroke="#fff" stroke-width="1.500"/><rect x="2.500" y="6" width="7" height="6" fill="none" stroke="#fff" stroke-width="1.500"/></svg></button>
        <button class="cap x" aria-label="Close"><svg viewBox="0 0 15 15"><path d="M3 3l9 9M12 3l-9 9" stroke="#fff" stroke-width="2.200"/></svg></button>
      </header>
      <div class="bars">
        <nav class="menu"><span class="grip"></span>${MENU.map((m) => html`<button>${key(m)}</button>`)}</nav>
        <div class="strip">
          <div class="tb"><span class="grip"></span>${tools(["newdoc", "open", "save", "|", "copyto", "cut", "copy", "paste", "|", "undo", "del", "|", "combo", "|", "find", "|", "first", "prev", "next", "last", "|", "outdent", "indent", "|", "window", "|", "whats", "help"])}</div>
          <div class="tb"><span class="grip"></span>${tools(["preview", "print", "export", "fax", "|", "word", "excel", "pdf", "|", "clip"])}</div>
        </div>
      </div>
      <div class="main">
        <aside class="side">
          <h2>My Workspace</h2>
          <ul><li class="on">AP Workspace</li><li>Subcontract Management</li></ul>
          ${bar("h", 90)}
        </aside>
        <div class="docs">
          <div class="pair top">${this.invoices()}${this.payment()}</div>
          <div class="pair bot">
            <section class="pane">${paneHead([{ text: "Accounts Payable Aging Report - AP..." }])}${report("ap", "Accounts Payable Aging", "Detail Report - All AP Accounts,\u00a0 Aging Date: 02/15/05", AP_W, AP_HEAD, AP_ROWS)}</section>
            <section class="pane">${paneHead([{ text: "Job Aging Report - JOBAGING" }])}${report("job", "Job Aging", "Detail Report - All AP Accounts,\u00a0 Aging Date: 02/15/05, Job 1000, Pacific View Apartments", JOB_W, JOB_HEAD, JOB_ROWS)}</section>
          </div>
        </div>
      </div>
      <footer class="status"><div class="strip">
        <div class="tb"><span class="grip"></span>
          <button class="cellb co1">${icon("company")}<span>Best Construction Company</span><span class="fill"></span></button><span class="sep"></span>
          <button class="cellb">${icon("user")}<span>ADMIN</span></button><span class="sep"></span>
          <button class="cellb" aria-label="Ledgers">${icon("books")}</button><span class="sep"></span>
          <button class="cellb">${icon("calendar")}<span>02/15/2005</span></button><span class="sep"></span>
          <button class="cellb">${icon("redx")}<span>RS</span></button>
        </div>
        <div class="tb"><span class="grip"></span>${tools(["tree", "checks", "|", "pages", "|", "binoc", "|", "layout", "arrow", "|", "zoomin", "zoomout", "zoom", "|", "first", "prev", "page", "next", "last", "|", "pageback", "pagefwd", "|", "ab", "arrow", "|", "refresh"])}</div>
      </div></footer>
    </div>`;
  }
}
